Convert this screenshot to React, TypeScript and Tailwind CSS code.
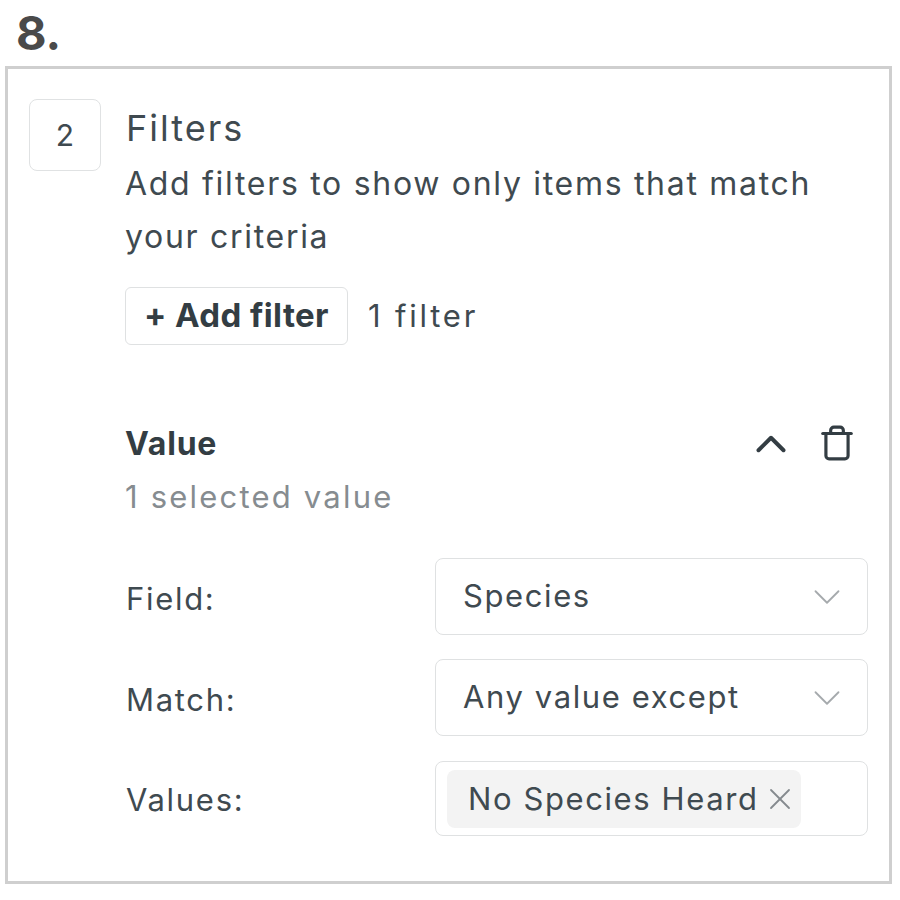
import { ChevronDown, ChevronUp, Trash, X } from "lucide-react"

const font = { fontFamily: "Inter" }

function FieldRow({ label, value }: { label: string; value: string }) {
  return (
    <div className="flex items-center">
      <div className="w-[309px] pt-[5px] text-[31px] tracking-[1.7px] text-[#3f4a50]">{label}</div>
      <div className="flex-1 h-[77px] flex items-center justify-between pl-[27px] pr-[17px] bg-white border border-[#dfe1e2] rounded-[8px] text-[31px] tracking-[1.6px] text-[#3f4a50]">
        <span>{value}</span>
        <ChevronDown size={46} strokeWidth={0.95} className="text-[#a6aaad]" />
      </div>
    </div>
  )
}

export default function App() {
  return (
    <div className="w-[900px] h-[900px] bg-white overflow-hidden" style={font}>
      <div className="h-[66px] pl-[16px] text-[47px] leading-[66px] font-bold text-[#4a4a4a]">8.</div>
      <div className="mx-[5px] w-[887px] h-[818px] border-[3px] border-[#cfcfcf] pt-[30px] pl-[21px] pr-[21px] flex gap-[25px]">
        <div className="w-[72px] h-[72px] shrink-0 border border-[#e0e2e3] rounded-[8px] flex items-center justify-center text-[30px] text-[#3f4a50]">2</div>
        <div className="flex-1">
          <div className="text-[36px] leading-[58px] tracking-[2px] text-[#3f4a50]">Filters</div>
          <div className="w-[700px] -ml-px text-[32px] leading-[53px] tracking-[1.7px] text-[#3f4a50]">Add filters to show only items that match your criteria</div>
          <div className="mt-[24px] -ml-px flex items-center gap-[20px]">
            <div className="h-[58px] px-[18px] flex items-center border border-[#dfe1e2] rounded-[6px] text-[33px] tracking-[0.4px] font-bold text-[#333d43]">+ Add filter</div>
            <div className="text-[31px] tracking-[2.8px] text-[#3f4a50]">1 filter</div>
          </div>
          <div className="mt-[72px] flex items-start justify-between pr-[12px]">
            <div className="-ml-px">
              <div className="text-[32px] leading-[54px] tracking-[0.8px] font-bold text-[#333d43]">Value</div>
              <div className="text-[31px] leading-[52px] tracking-[2.2px] text-[#868c90]">1 selected value</div>
            </div>
            <div className="flex items-center gap-[22px] text-[#333d43]">
              <ChevronUp size={50} strokeWidth={1.9} className="mt-[2px]" />
              <Trash size={38} strokeWidth={2} />
            </div>
          </div>
          <div className="mt-[35px] flex flex-col gap-[24px]">
            <FieldRow label="Field:" value="Species" />
            <FieldRow label="Match:" value="Any value except" />
            <div className="flex items-center">
              <div className="w-[309px] pt-[5px] text-[31px] tracking-[1.7px] text-[#3f4a50]">Values:</div>
              <div className="flex-1 h-[75px] mt-[1px] flex items-center pl-[11px] bg-white border border-[#dfe1e2] rounded-[8px]">
                <div className="h-[58px] pl-[21px] pr-[3px] flex items-center gap-[3px] bg-[#f3f3f3] rounded-[8px] text-[31px] tracking-[1.6px] text-[#3f4a50]">
                  <span className="pt-[1px]">No Species Heard</span>
                  <X size={36} strokeWidth={1.2} className="text-[#858a8e]" />
                </div>
              </div>
            </div>
          </div>
        </div>
      </div>
    </div>
  )
}
